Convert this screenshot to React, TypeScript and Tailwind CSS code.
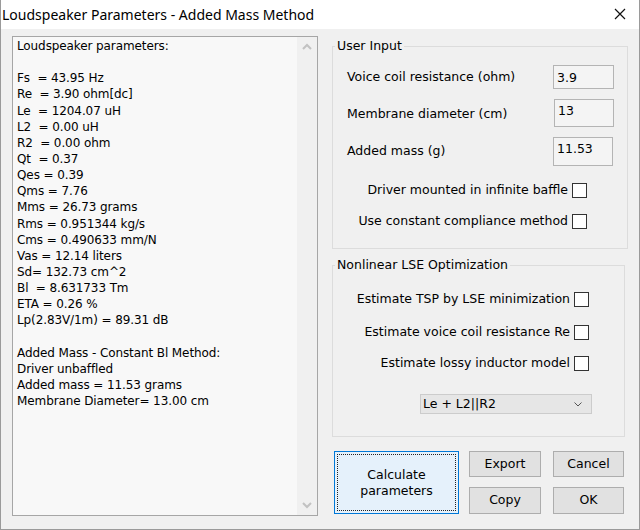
import { useState } from "react";

const resultLines = [
    "Loudspeaker parameters:",
    "",
    "Fs  = 43.95 Hz",
    "Re  = 3.90 ohm[dc]",
    "Le  = 1204.07 uH",
    "L2  = 0.00 uH",
    "R2  = 0.00 ohm",
    "Qt  = 0.37",
    "Qes = 0.39",
    "Qms = 7.76",
    "Mms = 26.73 grams",
    "Rms = 0.951344 kg/s",
    "Cms = 0.490633 mm/N",
    "Vas = 12.14 liters",
    "Sd= 132.73 cm^2",
    "Bl  = 8.631733 Tm",
    "ETA = 0.26 %",
    "Lp(2.83V/1m) = 89.31 dB",
    "",
    "Added Mass - Constant Bl Method:",
    "Driver unbaffled",
    "Added mass = 11.53 grams",
    "Membrane Diameter= 13.00 cm",
];

const CheckRow = ({
    label,
    checked,
    onToggle,
    className,
}: {
    label: string;
    checked: boolean;
    onToggle: () => void;
    className: string;
}) => (
    <label className={`flex items-center justify-end gap-[4px] h-[15px] ${className}`}>
        <span>{label}</span>
        <span
            onClick={onToggle}
            className="w-[15px] h-[15px] border border-[#333333] bg-white flex items-center justify-center text-[11px] leading-none"
        >
            {checked ? "✓" : ""}
        </span>
    </label>
);

const WinButton = ({ children, className }: { children: React.ReactNode; className: string }) => (
    <button className={`bg-[#e1e1e1] border border-[#adadad] text-[12.5px] text-black ${className}`}>
        {children}
    </button>
);

export default function App() {
    const [checks, setChecks] = useState<Record<string, boolean>>({});
    const toggle = (k: string) => setChecks((p) => ({ ...p, [k]: !p[k] }));

    return (
        <div
            className="w-[640px] h-[530px] bg-[#f0f0f0] border-x border-b border-[#9a9a9a] flex flex-col text-black text-[12.5px] overflow-hidden"
            style={{ fontFamily: '"DejaVu Sans", Verdana, sans-serif' }}
        >
            {/* Title bar */}
            <div className="h-[29px] bg-white flex items-center justify-between pl-[1px] pr-[13px] shrink-0">
                <span
                    className="text-[14px] text-black"
                    style={{ fontFamily: '"Noto Sans", "Open Sans", sans-serif' }}
                >
                    Loudspeaker Parameters - Added Mass Method
                </span>
                <svg width="12" height="12" viewBox="0 0 12 12" className="mt-[-2px]">
                    <path d="M1 1 L11 11 M11 1 L1 11" stroke="#111" strokeWidth="1.2" />
                </svg>
            </div>

            <div className="flex pl-[11px] pt-[7px]">
                {/* Results text box */}
                <div className="w-[306px] h-[480px] border border-[#a6a6a6] bg-[#f8f8f8] flex">
                    <div className="flex-1 pl-[4px] pt-[1px] text-[12px] leading-[16.15px] whitespace-pre tracking-[-0.1px]">
                        {resultLines.map((l, i) => (
                            <div key={i} className="h-[16.15px]">
                                {l}
                            </div>
                        ))}
                    </div>
                    <div className="w-[20px] bg-[#f0f0f0] flex flex-col items-center justify-between py-[6px]">
                        <svg width="10" height="7" viewBox="0 0 10 7">
                            <path d="M1 6 L5 2 L9 6" stroke="#c2c2c2" strokeWidth="2" fill="none" />
                        </svg>
                        <svg width="10" height="7" viewBox="0 0 10 7">
                            <path d="M1 1 L5 5 L9 1" stroke="#c2c2c2" strokeWidth="2" fill="none" />
                        </svg>
                    </div>
                </div>

                {/* Right column */}
                <div className="ml-[14px] mt-[2px] flex flex-col">
                    <fieldset className="w-[296px] border border-[#dcdcdc]">
                        <legend className="ml-[2px] px-[2px] leading-[16px] h-[16px]">User Input</legend>
                        <div className="pl-[14px] pr-[13px] pb-[19px]">
                            <div className="flex items-center justify-between h-[24px] mt-[11px]">
                                <span>Voice coil resistance (ohm)</span>
                                <input
                                    defaultValue="3.9"
                                    className="w-[61px] h-[24px] border border-[#b4b4b4] bg-[#f4f4f4] px-[3px] outline-none"
                                />
                            </div>
                            <div className="flex items-center justify-between h-[28px] mt-[10px]">
                                <span className="mt-[3px]">Membrane diameter (cm)</span>
                                <input
                                    defaultValue="13"
                                    className="w-[60px] h-[28px] border border-[#b4b4b4] bg-[#f4f4f4] px-[3px] pb-[6px] outline-none"
                                />
                            </div>
                            <div className="flex items-center justify-between h-[29px] mt-[10px] pr-[1px]">
                                <span>Added mass (g)</span>
                                <input
                                    defaultValue="11.53"
                                    className="w-[60px] h-[29px] border border-[#b4b4b4] bg-[#f4f4f4] px-[3px] pb-[6px] outline-none"
                                />
                            </div>
                            <div className="pr-[27px]">
                                <CheckRow
                                    label="Driver mounted in infinite baffle"
                                    checked={!!checks.baffle}
                                    onToggle={() => toggle("baffle")}
                                    className="mt-[17px]"
                                />
                                <CheckRow
                                    label="Use constant compliance method"
                                    checked={!!checks.compliance}
                                    onToggle={() => toggle("compliance")}
                                    className="mt-[16px]"
                                />
                            </div>
                        </div>
                    </fieldset>

                    <fieldset className="w-[293px] mt-[8px] border border-[#dcdcdc]">
                        <legend className="ml-[2px] px-[2px] leading-[16px] h-[16px]">
                            Nonlinear LSE Optimization
                        </legend>
                        <div className="pl-[14px] pr-[35px] pb-[22px]">
                            <CheckRow
                                label="Estimate TSP by LSE minimization"
                                checked={!!checks.tsp}
                                onToggle={() => toggle("tsp")}
                                className="mt-[19px]"
                            />
                            <CheckRow
                                label="Estimate voice coil resistance Re"
                                checked={!!checks.re}
                                onToggle={() => toggle("re")}
                                className="mt-[18px]"
                            />
                            <CheckRow
                                label="Estimate lossy inductor model"
                                checked={!!checks.lossy}
                                onToggle={() => toggle("lossy")}
                                className="mt-[16px]"
                            />
                            <div className="flex justify-end mt-[23px] mr-[-3px]">
                                <div className="w-[172px] h-[20px] bg-[#e6e6e6] border border-[#cccccc] flex items-center justify-between pl-[2px] pr-[9px]">
                                    <span>Le + L2||R2</span>
                                    <svg width="8" height="5" viewBox="0 0 8 5">
                                        <path d="M0.5 0.5 L4 4 L7.5 0.5" stroke="#555" strokeWidth="1" fill="none" />
                                    </svg>
                                </div>
                            </div>
                        </div>
                    </fieldset>

                    {/* Buttons */}
                    <div className="flex mt-[14px] ml-[2px]">
                        <button className="w-[125px] h-[63px] bg-[#e5f1fb] border border-[#0078d7] p-[2px] text-[12.5px] leading-[16px]">
                            <div className="w-full h-full border border-dotted border-[#222] flex items-center justify-center text-center">
                                Calculate
                                <br />
                                parameters
                            </div>
                        </button>
                        <div className="grid grid-cols-[72px_71px] gap-x-[12px] gap-y-[10px] ml-[10px]">
                            <WinButton className="h-[26px]">Export</WinButton>
                            <WinButton className="h-[26px]">Cancel</WinButton>
                            <WinButton className="h-[27px]">Copy</WinButton>
                            <WinButton className="h-[27px]">OK</WinButton>
                        </div>
                    </div>
                </div>
            </div>
        </div>
    );
}
